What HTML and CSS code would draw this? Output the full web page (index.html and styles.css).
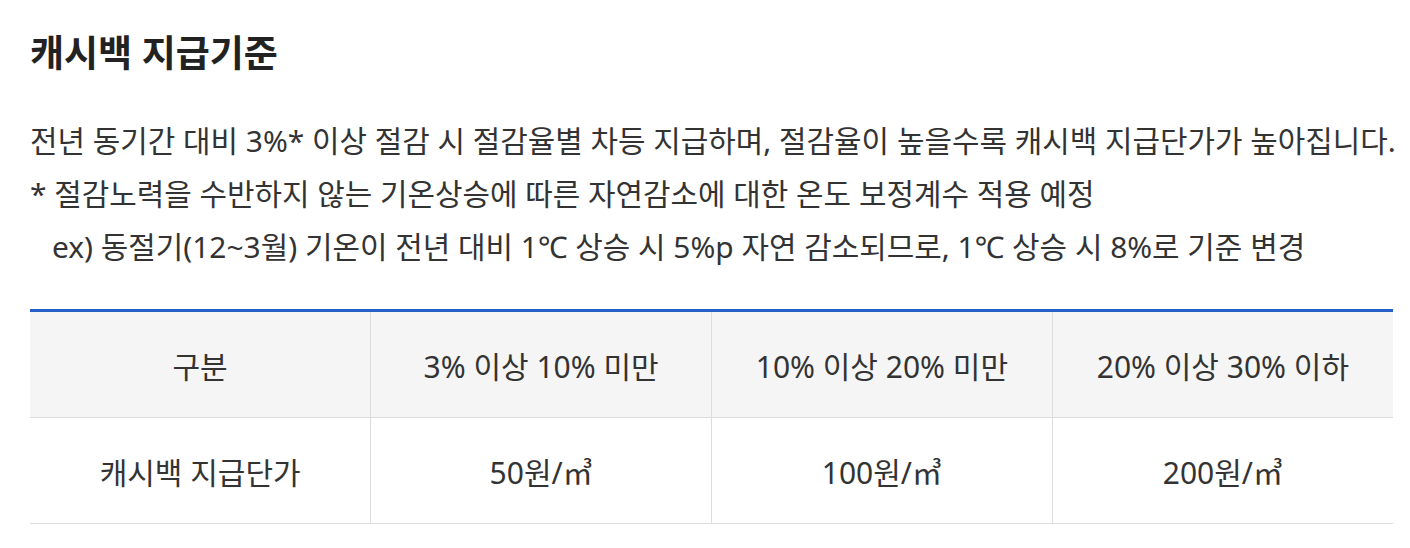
FILE: index.html
```html
<!DOCTYPE html>
<html lang="ko">
<head>
<meta charset="utf-8">
<link rel="stylesheet" href="styles.css">
</head>
<body>
<div class="page">
  <h2 class="title">캐시백 지급기준</h2>
  <div class="desc">
    <p>전년 동기간 대비 3%* 이상 절감 시 절감율별 차등 지급하며, 절감율이 높을수록 캐시백 지급단가가 높아집니다.</p>
    <p>* 절감노력을 수반하지 않는 기온상승에 따른 자연감소에 대한 온도 보정계수 적용 예정</p>
    <p class="indent">ex) 동절기(12~3월) 기온이 전년 대비 1℃ 상승 시 5%p 자연 감소되므로, 1℃ 상승 시 8%로 기준 변경</p>
  </div>
  <table class="tbl">
    <thead>
      <tr>
        <th>구분</th>
        <th>3% 이상 10% 미만</th>
        <th>10% 이상 20% 미만</th>
        <th>20% 이상 30% 이하</th>
      </tr>
    </thead>
    <tbody>
      <tr>
        <td>캐시백 지급단가</td>
        <td>50원/㎥</td>
        <td>100원/㎥</td>
        <td>200원/㎥</td>
      </tr>
    </tbody>
  </table>
</div>
</body>
</html>
```
FILE: styles.css
```css
html, body {
  margin: 0;
  padding: 0;
  background: #fff;
}
body {
  font-family: "Noto Sans", "Noto Sans CJK KR", sans-serif;
  color: #333;
}
.page {
  padding: 28px 17px 0 30px;
}
.title {
  margin: 0;
  font-size: 37px;
  font-weight: 700;
  line-height: 50px;
  color: #222;
}
.desc {
  margin-top: 36px;
  font-size: 29.9px;
  line-height: 53px;
  color: #333;
}
.desc p {
  margin: 0;
  white-space: nowrap;
}
.desc .indent {
  padding-left: 22px;
}
.tbl {
  margin-top: 36px;
  width: 1363px;
  border-collapse: collapse;
  table-layout: fixed;
  border-top: 3px solid #2560c8;
  font-size: 30px;
  color: #333;
}
.tbl th, .tbl td {
  height: 105px;
  padding: 0;
  text-align: center;
  vertical-align: middle;
  font-weight: 400;
  border-bottom: 1px solid #ddd;
  border-left: 1px solid #ddd;
}
.tbl th:first-child, .tbl td:first-child {
  border-left: none;
}
.tbl th {
  background: #f5f5f5;
}
```
